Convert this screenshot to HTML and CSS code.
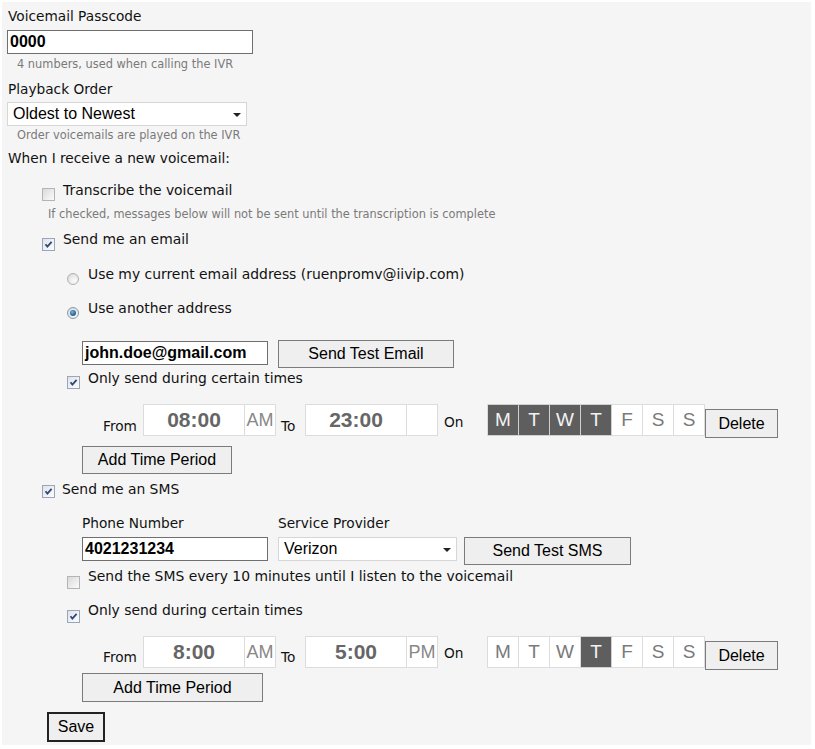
FILE: index.html
```html
<!DOCTYPE html>
<html>
<head>
<meta charset="utf-8">
<title>Voicemail Settings</title>
<link rel="stylesheet" href="styles.css">
</head>
<body>
<div class="panel">
  <div class="label l1">Voicemail Passcode</div>
  <div class="field passcode">0000</div>
  <div class="hint h1">4 numbers, used when calling the IVR</div>

  <div class="label l2">Playback Order</div>
  <div class="select playback"><span>Oldest to Newest</span><span class="arrow"></span></div>
  <div class="hint h2">Order voicemails are played on the IVR</div>

  <div class="label l3">When I receive a new voicemail:</div>

  <div class="crow r-transcribe">
    <span class="cb"></span><span class="ctext">Transcribe the voicemail</span>
  </div>
  <div class="hint h3">If checked, messages below will not be sent until the transcription is complete</div>

  <div class="crow r-email">
    <span class="cb checked"><svg viewBox="0 0 13 13" width="13" height="13"><path d="M3.5 6.2 L5.4 8.6 L9.6 3.8" fill="none" stroke="#2c4a78" stroke-width="1.8"/></svg></span><span class="ctext">Send me an email</span>
  </div>

  <div class="crow r-radio1">
    <span class="radio"></span><span class="ctext">Use my current email address (ruenpromv@iivip.com)</span>
  </div>
  <div class="crow r-radio2">
    <span class="radio sel"><span class="dot"></span></span><span class="ctext">Use another address</span>
  </div>

  <div class="frow r-emailin">
    <div class="field email">john.doe@gmail.com</div>
    <div class="btn btn-email">Send Test Email</div>
  </div>

  <div class="crow r-only1">
    <span class="cb checked"><svg viewBox="0 0 13 13" width="13" height="13"><path d="M3.5 6.2 L5.4 8.6 L9.6 3.8" fill="none" stroke="#2c4a78" stroke-width="1.8"/></svg></span><span class="ctext">Only send during certain times</span>
  </div>

  <div class="trow t1">
    <span class="tl from">From</span>
    <div class="tbox"><span class="tval">08:00</span><span class="tap">AM</span></div>
    <span class="tl to">To</span>
    <div class="tbox"><span class="tval">23:00</span><span class="tap"></span></div>
    <span class="tl onl">On</span>
    <div class="days">
      <span class="day act">M</span><span class="day act">T</span><span class="day act">W</span><span class="day act">T</span><span class="day">F</span><span class="day">S</span><span class="day">S</span>
    </div>
    <div class="btn btn-del">Delete</div>
  </div>
  <div class="btn btn-add1">Add Time Period</div>

  <div class="crow r-sms">
    <span class="cb checked"><svg viewBox="0 0 13 13" width="13" height="13"><path d="M3.5 6.2 L5.4 8.6 L9.6 3.8" fill="none" stroke="#2c4a78" stroke-width="1.8"/></svg></span><span class="ctext">Send me an SMS</span>
  </div>

  <div class="frow r-smslabels">
    <span class="slabel phone-l">Phone Number</span>
    <span class="slabel prov-l">Service Provider</span>
  </div>
  <div class="frow r-smsin">
    <div class="field phone">4021231234</div>
    <div class="select provider"><span>Verizon</span><span class="arrow"></span></div>
    <div class="btn btn-sms">Send Test SMS</div>
  </div>

  <div class="crow r-every">
    <span class="cb"></span><span class="ctext">Send the SMS every 10 minutes until I listen to the voicemail</span>
  </div>
  <div class="crow r-only2">
    <span class="cb checked"><svg viewBox="0 0 13 13" width="13" height="13"><path d="M3.5 6.2 L5.4 8.6 L9.6 3.8" fill="none" stroke="#2c4a78" stroke-width="1.8"/></svg></span><span class="ctext">Only send during certain times</span>
  </div>

  <div class="trow t2">
    <span class="tl from">From</span>
    <div class="tbox"><span class="tval">8:00</span><span class="tap">AM</span></div>
    <span class="tl to">To</span>
    <div class="tbox"><span class="tval">5:00</span><span class="tap">PM</span></div>
    <span class="tl onl">On</span>
    <div class="days">
      <span class="day">M</span><span class="day">T</span><span class="day">W</span><span class="day act">T</span><span class="day">F</span><span class="day">S</span><span class="day">S</span>
    </div>
    <div class="btn btn-del">Delete</div>
  </div>
  <div class="btn btn-add2">Add Time Period</div>

  <div class="btn btn-save">Save</div>
</div>
</body>
</html>
```

FILE: styles.css
```css
html, body {
  margin: 0;
  padding: 0;
  background: #ffffff;
}
body {
  font-family: "DejaVu Sans", Verdana, sans-serif;
  color: #111;
}
.panel {
  margin: 2px 0 0 2px;
  width: 809px;
  height: 743px;
  background: #f5f5f5;
  padding-top: 6px;
  box-sizing: border-box;
  overflow: hidden;
}
.label {
  font-size: 13.7px;
  line-height: 16px;
  height: 16px;
  margin-left: 6px;
  color: #111;
}
.l1 { margin-top: 0; }
.l2 { margin-top: 10px; }
.l3 { margin-top: 8px; }
.hint {
  font-size: 11.4px;
  line-height: 13px;
  height: 13px;
  color: #7a7a7a;
}
.h1 { margin-top: 4px; margin-left: 15px; }
.h2 { margin-top: 3px; margin-left: 15px; }
.h3 { margin-top: 10px; margin-left: 46px; }

.field {
  box-sizing: border-box;
  height: 24px;
  background: #fff;
  border: 1px solid #6f6f6f;
  font-family: "Liberation Sans", Arial, sans-serif;
  font-weight: bold;
  font-size: 16px;
  line-height: 22px;
  padding-left: 2px;
  color: #000;
}
.passcode { margin-top: 6px; margin-left: 5px; width: 246px; }
.select {
  box-sizing: border-box;
  height: 24px;
  background: #fff;
  border: 1px solid #d6d6d6;
  font-family: "Liberation Sans", Arial, sans-serif;
  font-size: 16px;
  line-height: 22px;
  padding-left: 5px;
  color: #000;
  display: flex;
  justify-content: space-between;
  align-items: center;
}
.arrow {
  width: 0;
  height: 0;
  border-left: 4px solid transparent;
  border-right: 4px solid transparent;
  border-top: 4px solid #222;
  margin-right: 5px;
  margin-top: 2px;
}
.playback { margin-top: 5px; margin-left: 5px; width: 240px; }

.crow {
  display: flex;
  align-items: flex-start;
  height: 16px;
  font-size: 13.9px;
  line-height: 16px;
}
.ctext { color: #111; white-space: nowrap; }
.cb {
  flex: none;
  width: 13px;
  height: 13px;
  box-sizing: border-box;
  border: 1px solid #b4b4b4;
  background: linear-gradient(135deg, #d9d9d9 0%, #eeeeee 60%, #fbfbfb 100%);
  position: relative;
}
.cb.checked {
  border-color: #9aa6b8;
  background: linear-gradient(135deg, #dfe3ea 0%, #f1f3f6 60%, #fdfdfd 100%);
}
.cb svg { position: absolute; left: -1px; top: -1px; }
.radio {
  flex: none;
  width: 12px;
  height: 12px;
  box-sizing: border-box;
  border-radius: 50%;
  border: 1px solid #b0b0b0;
  background: radial-gradient(circle at 65% 70%, #fbfbfb 0%, #e6e6e6 60%, #d2d2d2 100%);
  display: flex;
  align-items: center;
  justify-content: center;
}
.radio.sel { border-color: #8a98aa; }
.dot {
  width: 6px;
  height: 6px;
  border-radius: 50%;
  background: radial-gradient(circle at 40% 35%, #7fb0d8 0%, #2a6aa0 55%, #1d4f7c 100%);
}

.r-transcribe { margin-top: 16px; margin-left: 40px; }
.r-transcribe .cb { margin-top: 6px; margin-right: 8px; }
.r-email { margin-top: 10px; margin-left: 40px; }
.r-email .cb { margin-top: 7px; margin-right: 8px; }
.r-radio1 { margin-top: 19px; margin-left: 65px; }
.r-radio1 .radio { margin-top: 7px; margin-right: 9px; }
.r-radio2 { margin-top: 18px; margin-left: 65px; }
.r-radio2 .radio { margin-top: 7px; margin-right: 9px; }

.frow { display: flex; align-items: flex-start; }
.r-emailin { margin-top: 24px; margin-left: 80px; height: 28px; }
.email { width: 186px; margin-top: 1px; }
.btn {
  box-sizing: border-box;
  background: #efefef;
  border: 1px solid #7b7b7b;
  font-family: "Liberation Sans", Arial, sans-serif;
  font-size: 16px;
  color: #000;
  text-align: center;
  flex: none;
}
.btn-email { width: 176px; height: 28px; line-height: 26px; margin-left: 10px; }

.r-only1 { margin-top: 2px; margin-left: 65px; }
.r-only1 .cb { margin-top: 6px; margin-right: 8px; }

.trow {
  display: flex;
  align-items: flex-start;
  height: 32px;
  margin-left: 101px;
}
.t1 { margin-top: 18px; }
.tl { font-size: 13.7px; line-height: 16px; color: #111; }
.from { margin-top: 14px; width: 34px; }
.to { margin-top: 14px; margin-left: 5px; width: 18px; }
.onl { margin-top: 10px; margin-left: 6px; width: 19px; }
.tbox {
  display: flex;
  box-sizing: border-box;
  height: 32px;
  background: #fff;
  border: 1px solid #dcdcdc;
  margin-left: 6px;
  font-family: "Liberation Sans", Arial, sans-serif;
}
.tval {
  width: 100px;
  text-align: center;
  font-weight: bold;
  font-size: 21px;
  line-height: 30px;
  color: #666;
}
.tap {
  width: 31px;
  box-sizing: border-box;
  border-left: 1px solid #dcdcdc;
  text-align: center;
  font-size: 18px;
  line-height: 30px;
  color: #888;
}
.days {
  display: flex;
  margin-left: 24px;
  box-sizing: border-box;
  border-left: 1px solid #dcdcdc;
  background: #fff;
  font-family: "Liberation Sans", Arial, sans-serif;
}
.day {
  box-sizing: border-box;
  width: 31px;
  height: 32px;
  border: 1px solid #dcdcdc;
  border-left: none;
  text-align: center;
  font-size: 19px;
  line-height: 30px;
  color: #7a7a7a;
  background: #fff;
}
.day.act {
  background: #5e5e5e;
  color: #f2f2f2;
  border-color: #d0d0d0;
}
.btn-del { width: 73px; height: 29px; line-height: 27px; margin-top: 5px; }
.btn-add1 { margin-top: 10px; margin-left: 80px; width: 150px; height: 28px; line-height: 26px; }

.r-sms { margin-top: 7px; margin-left: 40px; }
.r-sms .cb { margin-top: 4px; margin-right: 7px; }

.r-smslabels { margin-top: 18px; margin-left: 80px; height: 16px; font-size: 13.7px; line-height: 16px; }
.phone-l { width: 196px; }
.r-smsin { margin-top: 6px; margin-left: 80px; height: 28px; }
.phone { width: 186px; }
.provider { width: 179px; margin-left: 10px; }
.btn-sms { width: 167px; height: 28px; line-height: 26px; margin-left: 7px; }

.r-every { margin-top: 3px; margin-left: 65px; }
.r-every .cb { margin-top: 8px; margin-right: 8px; }
.r-only2 { margin-top: 18px; margin-left: 65px; }
.r-only2 .cb { margin-top: 8px; margin-right: 8px; }

.t2 { margin-top: 18px; }
.t2 .from, .t2 .to { margin-top: 13px; }
.t2 .onl { margin-top: 9px; }
.btn-add2 { margin-top: 5px; margin-left: 80px; width: 181px; height: 29px; line-height: 27px; }

.btn-save {
  margin-top: 10px;
  margin-left: 45px;
  width: 58px;
  height: 30px;
  line-height: 26px;
  border: 2px solid #222;
}
```
